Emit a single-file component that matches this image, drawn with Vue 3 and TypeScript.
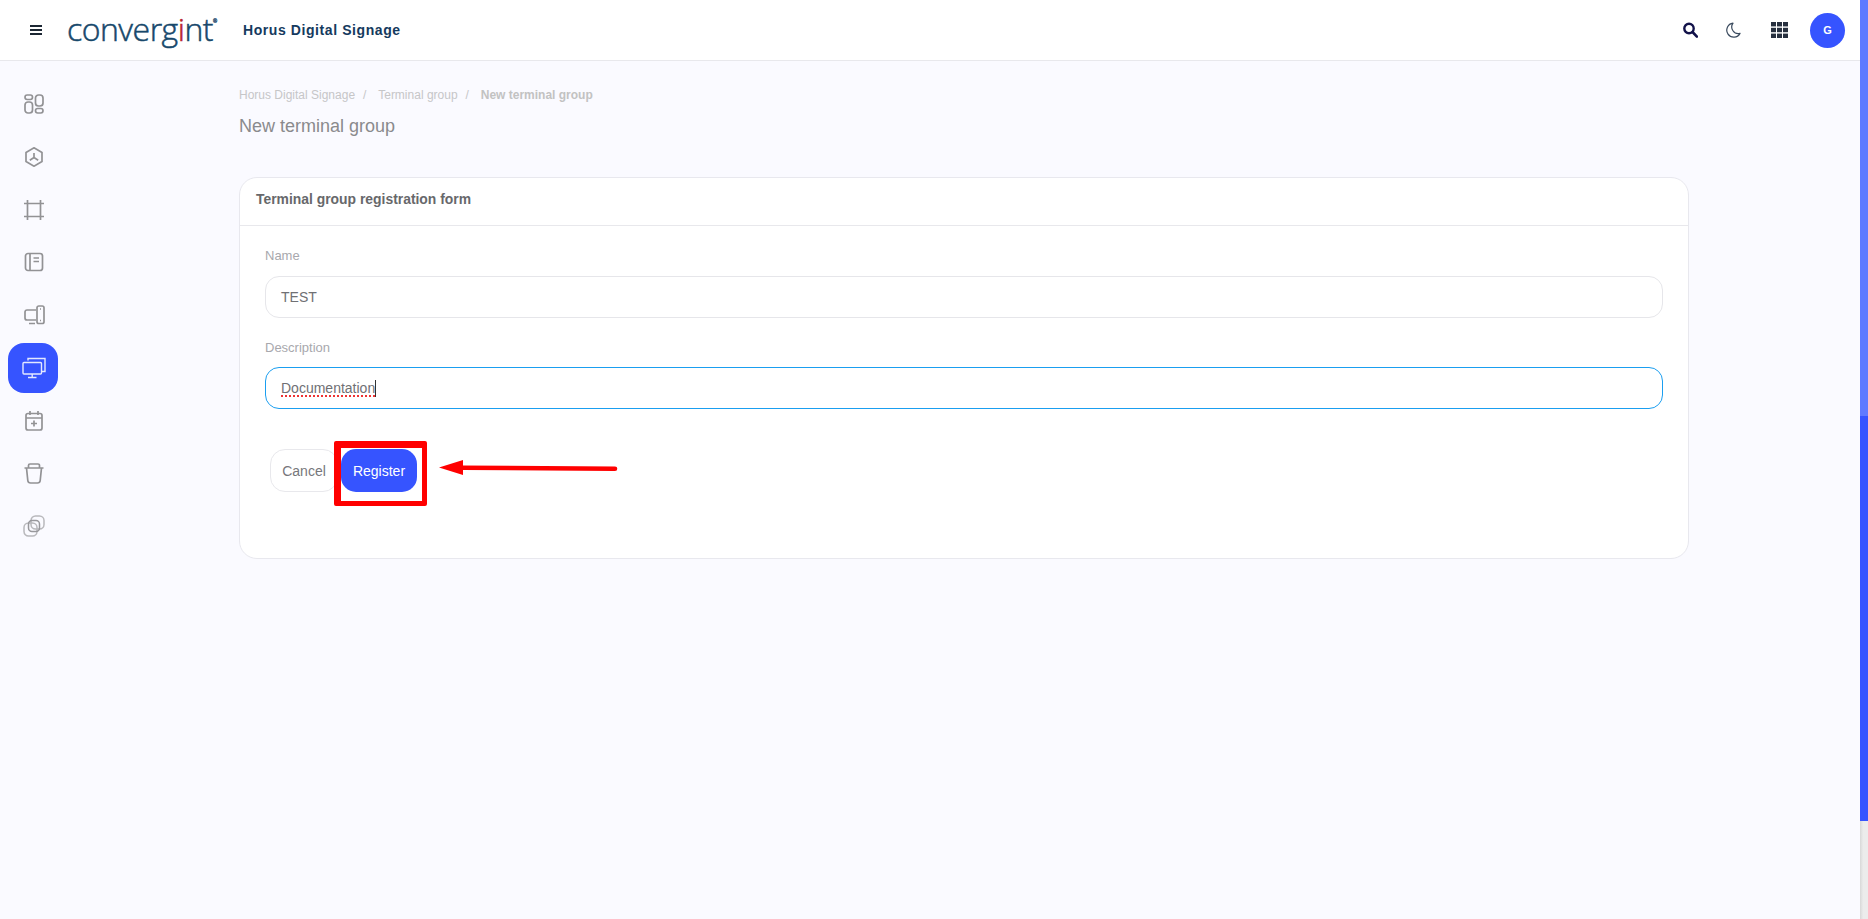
<script setup lang="ts">
const crumbs: string[] = ['Horus Digital Signage', 'Terminal group']
</script>

<template>
  <div class="page">
    <header class="topbar">
      <div class="brand">
        <svg class="burger" width="14" height="12" viewBox="0 0 14 12"><path d="M1 2h12M1 6h12M1 10h12" stroke="#1c2733" stroke-width="2" fill="none"/></svg>
        <div class="logo">converg<span class="logo-i">i</span>nt<sup>®</sup></div>
        <div class="product">Horus Digital Signage</div>
      </div>
      <div class="tools">
        <svg class="t-search" width="16" height="16" viewBox="0 0 16 16"><circle cx="7" cy="6.500" r="4.700" fill="none" stroke="#12124a" stroke-width="2.400"/><path d="M10.500 10l4.400 4.600" stroke="#12124a" stroke-width="2.600" stroke-linecap="round"/></svg>
        <svg class="t-moon" width="15" height="16" viewBox="0 0 15 16"><path d="M7 1.200A7 7 0 1 0 14 11.400 6.600 6.600 0 0 1 7 1.200z" fill="none" stroke="#3a4a5e" stroke-width="1.200" stroke-linejoin="round"/></svg>
        <svg class="t-grid" width="17" height="16" viewBox="0 0 17 16"><g fill="#27303f"><rect x="0" y="0" width="5" height="4.400"/><rect x="6" y="0" width="5" height="4.400"/><rect x="12" y="0" width="5" height="4.400"/><rect x="0" y="5.800" width="5" height="4.400"/><rect x="6" y="5.800" width="5" height="4.400"/><rect x="12" y="5.800" width="5" height="4.400"/><rect x="0" y="11.600" width="5" height="4.400"/><rect x="6" y="11.600" width="5" height="4.400"/><rect x="12" y="11.600" width="5" height="4.400"/></g></svg>
        <div class="avatar">G</div>
      </div>
    </header>

    <div class="body">
      <nav class="side">
        <div class="nav-item">
          <svg width="20" height="20" viewBox="0 0 20 20" class="ic"><rect x="1" y="1" width="7.500" height="4.500" rx="2.200"/><rect x="1" y="8" width="7.500" height="11" rx="3"/><rect x="11.500" y="1" width="7.500" height="11" rx="3"/><rect x="11.500" y="14.500" width="7.500" height="4.500" rx="2.200"/></svg>
        </div>
        <div class="nav-item">
          <svg width="20" height="20" viewBox="0 0 20 20" class="ic"><path d="M10 .8l8 4.600v9.200l-8 4.600-8-4.600V5.400z"/><path d="M10 6v4.500M10 10.500l-4.200 2.700M10 10.500l4.200 2.700"/></svg>
        </div>
        <div class="nav-item">
          <svg width="20" height="20" viewBox="0 0 20 20" class="ic"><path d="M3.500 0v20M16.500 0v20M0 3.500h20M0 16.500h20"/></svg>
        </div>
        <div class="nav-item">
          <svg width="20" height="20" viewBox="0 0 20 20" class="ic"><rect x="1.500" y="1.500" width="17" height="17" rx="2.500"/><path d="M6 1.500v17M9.500 6h5.500M9.500 9.500h5.500"/></svg>
        </div>
        <div class="nav-item">
          <svg width="21" height="20" viewBox="0 0 21 20" class="ic"><path d="M12 5H3a2 2 0 0 0-2 2v6a2 2 0 0 0 2 2h9M5 18.500h6"/><rect x="13" y="1" width="7" height="17.500" rx="1.800"/><path d="M16 15.500h1M16 4h1"/></svg>
        </div>
        <div class="nav-item active">
          <svg width="24" height="22" viewBox="0 0 24 22" class="ic-active"><path d="M6 3.500V1.500h17v13h-3"/><rect x="1" y="5.500" width="18.500" height="11.500" rx="1"/><path d="M10.200 17v3M6 20.500h8.500"/></svg>
        </div>
        <div class="nav-item">
          <svg width="18" height="20" viewBox="0 0 18 20" class="ic"><rect x="1" y="2.500" width="16" height="16.500" rx="2"/><path d="M1 7h16M5 0v4M13 0v4M9 9.500v6M6 12.500h6"/></svg>
        </div>
        <div class="nav-item">
          <svg width="20" height="21" viewBox="0 0 20 21" class="ic"><path d="M.5 5h19M4.500 5V2.500A1.500 1.500 0 0 1 6 1h8a1.500 1.500 0 0 1 1.500 1.500V5M2.500 5l1.300 12.500a2.800 2.800 0 0 0 2.800 2.500h6.800a2.800 2.800 0 0 0 2.800-2.500L17.500 5"/></svg>
        </div>
        <div class="nav-item">
          <svg width="22" height="22" viewBox="0 0 22 22" class="ic-pale"><rect x="1" y="8" width="13" height="13" rx="4.500"/><rect x="8" y="1" width="13" height="13" rx="4.500"/><rect x="5.500" y="5.500" width="11" height="11" rx="3.500" class="ic-core"/></svg>
        </div>
      </nav>

      <main class="content">
        <div class="crumbs">
          <template v-for="c in crumbs" :key="c">
            <span>{{ c }}</span><span class="sep">/</span>
          </template>
          <span class="crumb-current">New terminal group</span>
        </div>
        <h1 class="title">New terminal group</h1>

        <section class="card">
          <div class="card-head">Terminal group registration form</div>
          <div class="card-body">
            <label class="label">Name</label>
            <div class="field">TEST</div>
            <label class="label label-2">Description</label>
            <div class="field focus"><span class="typo">Documentation</span><span class="caret"></span></div>
            <div class="actions">
              <button class="btn cancel">Cancel</button>
              <button class="btn register">Register</button>
              <div class="mark"></div>
              <svg class="arrow" width="180" height="16" viewBox="0 0 180 16"><path d="M0 7.500L24 0v5.500l152 1a2.300 2.300 0 0 1 0 4.600L24 10v5z" fill="#ff0000"/></svg>
            </div>
          </div>
        </section>
      </main>
    </div>

    <div class="scroll">
      <div class="s-top"></div>
      <div class="s-thumb"></div>
      <div class="s-track"></div>
    </div>
  </div>
</template>

<style>
html, body { margin: 0; padding: 0; overflow: hidden; }
</style>

<style scoped>
.page {
  width: 1868px; height: 919px; position: relative; overflow: hidden;
  background: #fafaff; font-family: "Liberation Sans", Arial, sans-serif;
  display: flex; flex-direction: column;
}
.topbar {
  height: 61px; box-sizing: border-box; flex: none; background: #fff; border-bottom: 1px solid #e8e8ec;
  display: flex; align-items: center; justify-content: space-between;
  padding-right: 8px;
}
.brand { display: flex; align-items: center; }
.burger { margin-left: 29px; }
.logo {
  margin-left: 24px; width: 150px; font-family: "Open Sans", sans-serif; font-weight: 300;
  font-size: 32px; line-height: 40px; color: #17486b; letter-spacing: -0.5px; white-space: nowrap;
  -webkit-text-stroke: 0.5px #17486b; position: relative; top: -1px;
}
.logo-i { color: #b8232c; -webkit-text-stroke: 0.5px #b8232c; }
.logo sup { font-size: 5px; line-height: 0; vertical-align: 18px; letter-spacing: 0; }
.product {
  margin-left: 26px; font-weight: 700; font-size: 14px; letter-spacing: .58px; color: #153a5e; white-space: nowrap;
}
.tools { display: flex; align-items: center; }
.t-search { margin-right: 28px; }
.t-moon { margin-right: 30px; }
.t-grid { margin-right: 22px; }
.avatar {
  width: 35px; height: 35px; border-radius: 50%; background: #3654ff; color: #fff;
  font-size: 11px; font-weight: 700; display: flex; align-items: center; justify-content: center;
  margin-right: 15px;
}
.body { flex: 1; display: flex; min-height: 0; }
.side {
  width: 66px; flex: none; display: flex; flex-direction: column; align-items: center; padding-top: 18px;
}
.nav-item {
  width: 50px; height: 50px; flex: none; margin-bottom: 2.800px; display: flex; align-items: center; justify-content: center;
  border-radius: 16px;
}
.nav-item svg { margin-left: 2px; }
.nav-item.active { background: #3654ff; }
.ic { fill: none; stroke: #929295; stroke-width: 1.700; }
.ic-active { fill: none; stroke: #e3e8ff; stroke-width: 1.400; }
.ic-pale { fill: none; stroke: #b8b8bc; stroke-width: 1.500; }
.ic-core { stroke: #98989c; }
.content { flex: 1; padding: 27px 0 0 173px; width: 0; }
.crumbs { font-size: 12px; line-height: 14px; color: #c6c6c8; white-space: nowrap; }
.sep { margin: 0 11.800px 0 8px; }
.crumb-current { font-weight: 700; color: #c2c2c2; }
.title {
  margin: 12px 0 0; font-size: 18px; line-height: 24px; font-weight: 400; color: #8a8a8d;
}
.card {
  width: 1450px; height: 382px; margin-top: 39px; box-sizing: border-box;
  background: #fff; border: 1px solid #e8e8ee; border-radius: 18px;
}
.card-head {
  height: 48px; box-sizing: border-box; border-bottom: 1px solid #e8e8ec; padding: 13px 16px 0;
  font-size: 13.900px; line-height: 17px; font-weight: 700; color: #67686b; white-space: nowrap;
}
.card-body { padding: 22px 25px 0 25px; }
.label { display: block; font-size: 13px; line-height: 15px; color: #a8a8ad; }
.label-2 { margin-top: 22px; }
.field {
  margin-top: 13px; height: 42px; box-sizing: border-box; border: 1px solid #e6e6ea; border-radius: 14px;
  padding: 0 15px; display: flex; align-items: center; font-size: 14px; color: #707074;
}
.field.focus { border-color: #1a9ef0; margin-top: 12px; }
.typo { text-decoration: underline dotted #ee3333 1.500px; text-underline-offset: 2px; }
.caret { width: 1px; height: 17px; background: #333; }
.actions { position: relative; display: flex; margin-top: 40px; padding-left: 5px; gap: 3px; }
.btn {
  height: 43px; border-radius: 15px; font-family: inherit; font-size: 14px; box-sizing: border-box; padding: 0;
}
.cancel { width: 68px; background: #fff; border: 1px solid #e8e8ec; color: #77777b; }
.register { width: 76px; background: #3654ff; border: none; color: #fff; }
.mark {
  position: absolute; left: 69px; top: -8px; width: 93px; height: 65px; box-sizing: border-box;
  border-style: solid; border-width: 7px 5px 5px 7px; border-color: #ff0000; border-radius: 2px; pointer-events: none;
}
.arrow { position: absolute; left: 174px; top: 11px; }
.scroll {
  position: absolute; top: 0; right: 0; width: 8px; height: 919px; display: flex; flex-direction: column;
}
.s-top { height: 416px; background: #5f7aff; }
.s-thumb { height: 405px; background: #3654ff; }
.s-track { flex: 1; background: linear-gradient(90deg, #d8d8d8, #ececec 40%); }
</style>
